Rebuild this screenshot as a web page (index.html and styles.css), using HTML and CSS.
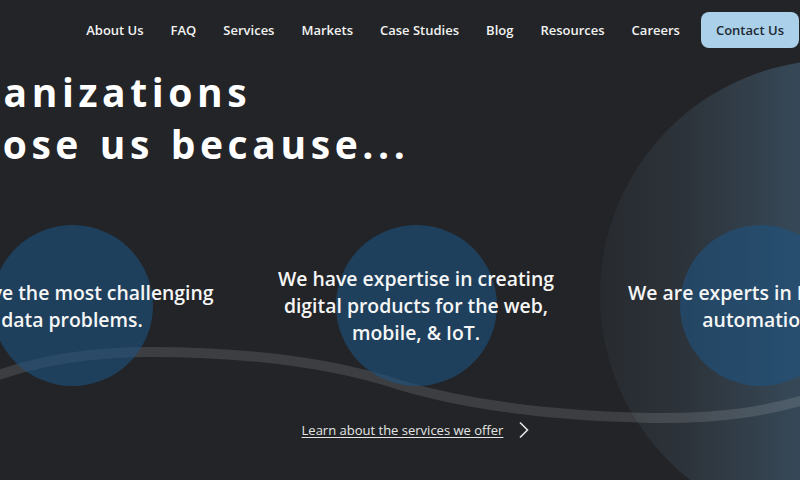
FILE: index.html
```html
<!DOCTYPE html>
<html lang="en">
<head>
  <meta charset="utf-8">
  <title>Why organizations choose us</title>
  <link rel="stylesheet" href="styles.css">
</head>
<body>
  <!-- Top navigation -->
  <header class="nav">
    <a class="nav-link" href="#">About Us</a>
    <a class="nav-link" href="#">FAQ</a>
    <a class="nav-link" href="#">Services</a>
    <a class="nav-link" href="#">Markets</a>
    <a class="nav-link" href="#">Case Studies</a>
    <a class="nav-link" href="#">Blog</a>
    <a class="nav-link" href="#">Resources</a>
    <a class="nav-link" href="#">Careers</a>
    <a class="nav-cta" href="#">Contact Us</a>
  </header>

  <main class="hero">
    <div class="hero-orb"></div>
    <svg class="hero-wave" viewBox="0 0 800 140" width="800" height="140" aria-hidden="true">
      <path d="M -30 86 C 20 64, 80 52, 150 52 C 250 52, 330 62, 400 85 C 470 106, 560 116, 650 118 C 720 119, 770 112, 830 92" fill="none" stroke="rgba(255,255,255,0.12)" stroke-width="10"/>
    </svg>

    <div class="stage">
      <h1 class="headline">Organizations<br>choose us because...</h1>

      <div class="reasons">
        <div class="reason">
          <span class="reason-dot"></span>
          <p class="reason-text">We solve the most challenging data problems.</p>
        </div>
        <div class="reason">
          <span class="reason-dot"></span>
          <p class="reason-text">We have expertise in creating digital products for the web, mobile, &amp; IoT.</p>
        </div>
        <div class="reason">
          <span class="reason-dot"></span>
          <p class="reason-text">We are experts in Intelligent automation.</p>
        </div>
      </div>

      <div class="more">
        <a class="more-link" href="#">Learn about the services we offer</a>
        <svg class="more-arrow" viewBox="0 0 12 18" width="12" height="18" aria-hidden="true">
          <path d="M 2 1.5 L 9.5 9 L 2 16.5" fill="none" stroke="#e6e6e6" stroke-width="1.6"/>
        </svg>
      </div>
    </div>
  </main>
</body>
</html>
```

FILE: styles.css
```css
/* Base */
body {
  margin: 0;
  background: #222427;
  color: #f4f4f4;
  font-family: "Open Sans", "Noto Sans", sans-serif;
  overflow: hidden;
  height: 480px;
}

/* Navigation */
.nav {
  display: flex;
  justify-content: flex-end;
  align-items: center;
  gap: 27px;
  height: 36px;
  padding: 12px 1px 12px 0;
  position: relative;
  z-index: 2;
}
.nav-link {
  color: #f2f2f2;
  text-decoration: none;
  font-size: 13px;
  font-weight: 600;
}
.nav-cta {
  display: flex;
  align-items: center;
  height: 36px;
  padding: 0 15px;
  margin-left: -6px;
  background: #abd0e9;
  color: #1d2833;
  border-radius: 8px;
  text-decoration: none;
  font-size: 13px;
  font-weight: 600;
}

/* Hero section */
.hero {
  position: relative;
  height: 420px;
  overflow: hidden;
}
.hero-orb {
  position: absolute;
  left: 600px;
  top: 0;
  width: 470px;
  height: 470px;
  border-radius: 50%;
  background: linear-gradient(90deg, #272b30 0%, #2d333a 18%, #364857 42%, #425b72 100%);
}
.hero-wave {
  position: absolute;
  left: 0;
  top: 240px;
}

/* Content is wider than the window and shifted left */
.stage {
  position: relative;
  width: 1032px;
  margin-left: -100px;
}
.headline {
  margin: 6px 0 0 19px;
  font-size: 39px;
  line-height: 52px;
  font-weight: 700;
  letter-spacing: 4.6px;
  word-spacing: 2px;
  color: #ffffff;
}

.reasons {
  display: flex;
  margin-top: 55px;
}
.reason {
  display: grid;
  place-items: center;
  width: 344px;
  height: 161px;
}
.reason-dot,
.reason-text {
  grid-area: 1 / 1;
}
.reason-dot {
  width: 161px;
  height: 161px;
  border-radius: 50%;
  background: rgba(30, 84, 128, 0.6);
}
.reason-text {
  position: relative;
  width: 300px;
  margin: 0;
  text-align: center;
  font-size: 19.4px;
  line-height: 27px;
  font-weight: 600;
  color: #f6f6f6;
}

/* Link to services */
.more {
  display: flex;
  justify-content: center;
  align-items: center;
  gap: 15px;
  margin-top: 35px;
}
.more-link {
  color: #e4e4e4;
  font-size: 13px;
  text-decoration: underline;
  text-underline-offset: 2px;
}
```
